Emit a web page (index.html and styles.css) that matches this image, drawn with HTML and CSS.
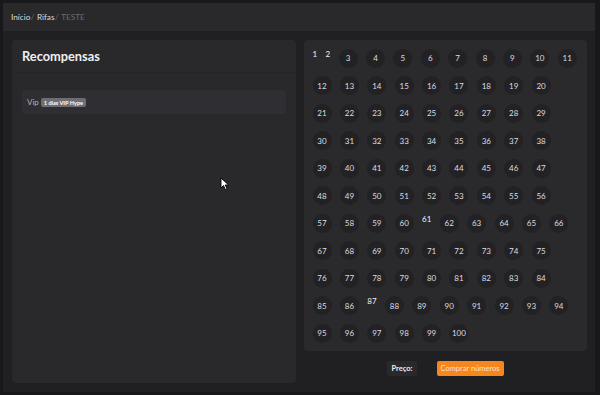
FILE: index.html
```html
<!DOCTYPE html>
<html lang="pt">
<head>
    <meta charset="UTF-8">
    <meta name="viewport" content="width=device-width, initial-scale=1.0">
    <title>TESTE - Rifas</title>
    <link rel="stylesheet" href="styles.css">
</head>
<body>
    <div class="app">
        <nav class="breadcrumb">
            <a href="#">Início</a><span class="sep">/</span>
            <a href="#">Rifas</a><span class="sep">/</span>
            <span class="current">TESTE</span>
        </nav>

        <div class="content">
            <div class="card">
                <div class="card-header">
                    <h1>Recompensas</h1>
                </div>
                <div class="card-body">
                    <div class="reward">
                        <span class="reward-type">Vip</span>
                        <span class="badge">1 dias VIP Hype</span>
                    </div>
                </div>
            </div>

            <div class="raffle">
                <div id="numbers" class="numbers"></div>
                <div class="raffle-footer">
                    <span class="price">Preço:</span>
                    <button class="buy-btn">Comprar números</button>
                </div>
            </div>
        </div>

        <svg class="cursor" width="10" height="14" viewBox="0 0 10 14">
            <path d="M1 1 L1 11 L3.5 8.6 L5.3 12.6 L7 11.8 L5.2 8 L8.6 8 Z" fill="#fff" stroke="#000" stroke-width="0.9"/>
        </svg>
    </div>

    <script>
        const taken = [1, 2, 61, 87];
        const container = document.getElementById('numbers');

        for (let i = 1; i <= 100; i++) {
            const num = document.createElement('span');
            num.classList.add('num');
            if (taken.includes(i)) num.classList.add('taken');
            num.innerText = i;
            container.appendChild(num);
        }
    </script>
</body>
</html>
```

FILE: styles.css
```css
body {
    font-family: Lato, "Noto Sans", sans-serif;
    margin: 0;
    padding: 3px 5px 3px 3px;
    background-color: #18171a;
}

.app {
    position: relative;
    height: 389px;
    background-color: #201f22;
}

.breadcrumb {
    height: 28px;
    display: flex;
    align-items: center;
    padding-left: 8px;
    background-color: #29282b;
    font-size: 8.2px;
}

.breadcrumb a {
    color: #dcdcde;
    text-decoration: none;
}

.breadcrumb .sep {
    color: #6d6c70;
    margin: 0 2.5px 0 0.5px;
}

.breadcrumb .current {
    color: #6d6c70;
}

.content {
    display: grid;
    grid-template-columns: 284px 283px;
    gap: 8px;
    padding: 9px;
    height: 343px;
}

.card {
    background-color: #29282b;
    border-radius: 4px;
}

.card-header {
    height: 32px;
    display: flex;
    align-items: center;
    padding: 0 10px;
    border-bottom: 1px solid #252427;
}

.card-header h1 {
    margin: 0;
    font-size: 12.8px;
    font-weight: bold;
    color: #f0f0f2;
}

.card-body {
    padding: 17px 10px;
}

.reward {
    height: 24px;
    display: flex;
    align-items: center;
    gap: 2px;
    padding: 0 5px;
    background-color: #2f2e32;
    border-radius: 3px;
}

.reward-type {
    font-size: 8px;
    color: #b4b4b8;
}

.badge {
    padding: 1px 3px;
    background-color: #6e6d73;
    color: #fff;
    font-size: 5.6px;
    font-weight: bold;
    border-radius: 2px;
}

.raffle {
    display: flex;
    flex-direction: column;
    align-items: center;
}

.numbers {
    align-self: stretch;
    display: flex;
    flex-wrap: wrap;
    align-content: flex-start;
    column-gap: 8.4px;
    row-gap: 8.5px;
    padding: 8.5px 9.5px 8px 8.5px;
    background-color: #2a292c;
    border-radius: 4px;
}

.num {
    width: 19px;
    height: 19px;
    display: flex;
    align-items: center;
    justify-content: center;
    background-color: #222124;
    border-radius: 50%;
    color: #dddde0;
    font-size: 8px;
}

.num.taken {
    width: auto;
    align-items: flex-start;
    background: none;
    line-height: 11px;
    color: #f2f2f4;
}

.raffle-footer {
    display: flex;
    align-items: center;
    gap: 20px;
    margin-top: 10px;
}

.price {
    height: 15px;
    display: flex;
    align-items: center;
    padding: 0 4px;
    background-color: #29282b;
    border-radius: 2px;
    color: #f0f0f2;
    font-size: 7.5px;
    font-weight: bold;
}

.buy-btn {
    height: 15px;
    padding: 0 4px;
    border: none;
    border-radius: 2px;
    background-color: #f7861c;
    color: #fde6d0;
    font-family: inherit;
    font-size: 7.5px;
    cursor: pointer;
}

.cursor {
    position: absolute;
    left: 217px;
    top: 174px;
}
```
